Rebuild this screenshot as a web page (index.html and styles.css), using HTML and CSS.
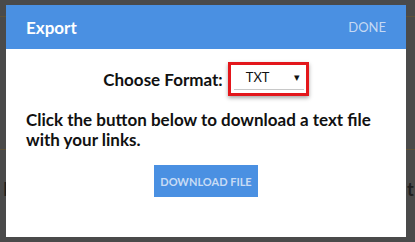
FILE: index.html
```html
<!DOCTYPE html>
<html lang="en">
<head>
  <meta charset="UTF-8" />
  <title>Export</title>
  <link rel="stylesheet" href="styles.css">
</head>
<body>

 <!-- pagina sotto l'overlay -->
 <div class="backdrop">
  <div class="bg-line bg-line-top"></div>
  <div class="bg-line bg-line-mid"></div>
  <span class="bg-letter bg-letter-left">I</span>
  <span class="bg-letter bg-letter-right">t</span>
 </div>

 <div class="modal">
  <div class="modal-header">
    <h1>Export</h1>
    <button class="btn-done">DONE</button>
  </div>

  <div class="modal-body">
    <div class="format-row">
      <label for="format">Choose Format:</label>
      <div class="highlight">
        <div class="select-box">
          <span id="format">TXT</span>
          <span class="arrow">&#9662;</span>
        </div>
      </div>
    </div>

    <p class="info">Click the button below to download a text file with your links.</p>

    <div class="actions">
      <button class="btn-download">DOWNLOAD FILE</button>
    </div>
  </div>
 </div>

</body>
</html>
```

FILE: styles.css
```css
body {
  margin: 0;
  width: 415px;
  height: 242px;
  background: #4a4a4a;
  font-family: Lato, "Open Sans", sans-serif;
  overflow: hidden;
  position: relative;
  padding: 5px 0 0 6px;
  box-sizing: border-box;
}

/* pagina dietro (appena visibile) */
.backdrop {
  position: absolute;
  inset: 0;
}
.bg-line {
  position: absolute;
  left: 0;
  right: 0;
  height: 1px;
  background: #5e5238;
}
.bg-line-top { top: 16px; }
.bg-line-mid { top: 149px; }
.bg-letter {
  position: absolute;
  top: 178px;
  font-size: 18px;
  font-weight: bold;
  color: #1e1e1e;
}
.bg-letter-left { left: 3px; }
.bg-letter-right { left: 407px; }

/* MODALE */
.modal {
  position: relative;
  width: 400px;
  height: 232px;
  background: white;
}
.modal-header {
  height: 44px;
  background: #4a90e2;
  display: flex;
  align-items: center;
  justify-content: space-between;
  padding: 0 20px;
}
.modal-header h1 {
  margin: 0;
  font-size: 17px;
  font-weight: bold;
  color: white;
}
.btn-done {
  border: none;
  background: none;
  padding: 0;
  font-family: inherit;
  font-size: 13px;
  color: #c5d9f3;
  cursor: pointer;
}

.modal-body {
  padding: 13px 20px 0;
}
.format-row {
  display: flex;
  justify-content: center;
  align-items: center;
  gap: 5px;
  font-size: 17px;
  font-weight: bold;
  color: #111;
}
.highlight {
  border: 3px solid #e3161b;
  padding: 0 2px 3px 3px;
  box-shadow: 0 2px 4px rgba(0,0,0,0.35);
}
.select-box {
  display: flex;
  justify-content: space-between;
  align-items: center;
  width: 54px;
  height: 24px;
  padding: 0 4px 0 12px;
  border-bottom: 1px solid #c8c8c8;
  font-size: 13px;
  font-weight: normal;
  color: #111;
}
.arrow {
  font-size: 11px;
}

.info {
  margin: 14px 0 0;
  font-size: 17px;
  font-weight: bold;
  line-height: 20px;
  color: #111;
}

.actions {
  display: flex;
  justify-content: center;
  margin-top: 15px;
}
.btn-download {
  width: 104px;
  height: 32px;
  border: none;
  background: #4a90e2;
  color: #c8dcf5;
  font-family: inherit;
  font-size: 11px;
  font-weight: bold;
  cursor: pointer;
}
```
